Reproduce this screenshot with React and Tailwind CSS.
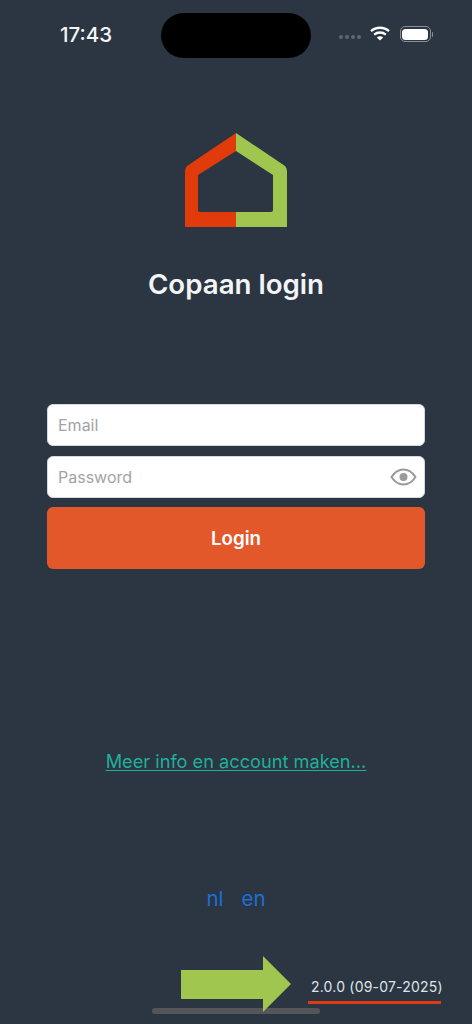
import React from "react";

function Logo() {
  return (
    <svg width="104" height="95" viewBox="0 0 104 95" className="block">
      <path d="M52 0 L3 33 Q1 35 1 38 L1 94 L52 94 L52 79 L16 79 Q14 79 14 77 L14 42 L52 18 Z" fill="#e13a0b" />
      <path d="M52 0 L101 33 Q103 35 103 38 L103 94 L52 94 L52 79 L87 79 Q89 79 89 77 L89 42 L52 18 Z" fill="#a0c64f" />
    </svg>
  );
}

function Eye() {
  return (
    <svg width="27" height="18" viewBox="0 0 27 18" fill="none">
      <path d="M1.5 9 C5 3.5 9 1.5 13.5 1.5 C18 1.5 22 3.5 25.5 9 C22 14.5 18 16.5 13.5 16.5 C9 16.5 5 14.5 1.5 9 Z" stroke="#9a9a9a" strokeWidth="2" />
      <circle cx="13.5" cy="9" r="4" fill="#9a9a9a" />
    </svg>
  );
}

function Wifi() {
  return (
    <svg width="20" height="15" viewBox="0 0 20 15" fill="none" className="mt-[-2px]">
      <path d="M1 5.2 C6 0.6 14 0.6 19 5.2" stroke="#fff" strokeWidth="2.3" />
      <path d="M4.2 8.6 C7.4 5.8 12.6 5.8 15.8 8.6" stroke="#fff" strokeWidth="2.3" />
      <path d="M10 14.6 L6.8 11.4 C8.6 9.9 11.4 9.9 13.2 11.4 Z" fill="#fff" />
    </svg>
  );
}

function Battery() {
  return (
    <div className="flex items-center gap-[1px]">
      <div className="w-[31px] h-[16px] rounded-[5px] border border-[#8b8f96] p-[1.5px]">
        <div className="w-full h-full rounded-[3.5px] bg-white" />
      </div>
      <div className="w-[1.5px] h-[5px] rounded-r-sm bg-[#8b8f96]" />
    </div>
  );
}

export default function App() {
  return (
    <div className="relative w-[472px] h-[1024px] overflow-hidden bg-[#2c3542] font-['Inter','Liberation_Sans',sans-serif] flex flex-col items-center">
      {/* status bar */}
      <div className="w-full h-[45px] mt-[13px] pl-[60px] pr-[39px] flex items-center">
        <span className="text-[20.5px] leading-none font-medium text-[#f4f5f6] w-[101px] mt-[-1px]">17:43</span>
        <div className="w-[150px] h-[45px] rounded-full bg-black" />
        <div className="w-[122px] flex items-center justify-end gap-[10px] mt-[-3px]">
          <div className="flex gap-[2px] mt-[6px] mr-[-1px]">
            <span className="w-[4px] h-[4px] rounded-full bg-[#5f6670]" />
            <span className="w-[4px] h-[4px] rounded-full bg-[#5f6670]" />
            <span className="w-[4px] h-[4px] rounded-full bg-[#5f6670]" />
            <span className="w-[4px] h-[4px] rounded-full bg-[#5f6670]" />
          </div>
          <Wifi />
          <Battery />
        </div>
      </div>

      <div className="mt-[75px]">
        <Logo />
      </div>

      <h1 className="mt-[39px] text-[27.7px] leading-[34px] font-semibold text-[#f2f4f5]">Copaan login</h1>

      {/* form */}
      <div className="mt-[103px] w-[378px] flex flex-col">
        <div className="h-[42px] rounded-md bg-white border border-[#d5d8dc] flex items-center pl-[10px] text-[16px] text-[#a3a3a3]">
          Email
        </div>
        <div className="mt-[10px] h-[42px] rounded-md bg-white border border-[#d5d8dc] flex items-center justify-between pl-[10px] pr-[7px] text-[16px] text-[#a3a3a3]">
          <span>Password</span>
          <Eye />
        </div>
        <button className="mt-[9px] h-[62px] pt-[2px] rounded-md bg-[#e2582b] text-white text-[18.7px] font-semibold">
          Login
        </button>
      </div>

      <a className="mt-[180px] text-[18.2px] leading-[24px] text-[#1fb09a] underline underline-offset-2">
        Meer info en account maken...
      </a>

      <div className="mt-[114px] flex gap-[18px] text-[20.5px] leading-[24px] text-[#1a70d8]">
        <span>nl</span>
        <span>en</span>
      </div>

      {/* annotation */}
      <svg width="110" height="56" viewBox="0 0 110 56" className="absolute left-[181px] top-[956px] z-10">
        <path d="M0 14 L82 14 L82 0 L110 28 L82 56 L82 43 L0 43 Z" fill="#a0c64f" />
      </svg>
      <div className="absolute left-[311px] top-[978px] text-[14px] leading-[18px] tracking-[0.2px] text-[#dfe3e8] whitespace-nowrap">
        2.0.0 (09-07-2025)
      </div>
      <div className="absolute left-[308px] top-[1001px] w-[133px] h-[3px] bg-[#e03a14]" />

      {/* home indicator */}
      <div className="absolute left-[152px] top-[1008px] w-[168px] h-[6px] rounded-full bg-[#55565a]" />
    </div>
  );
}
